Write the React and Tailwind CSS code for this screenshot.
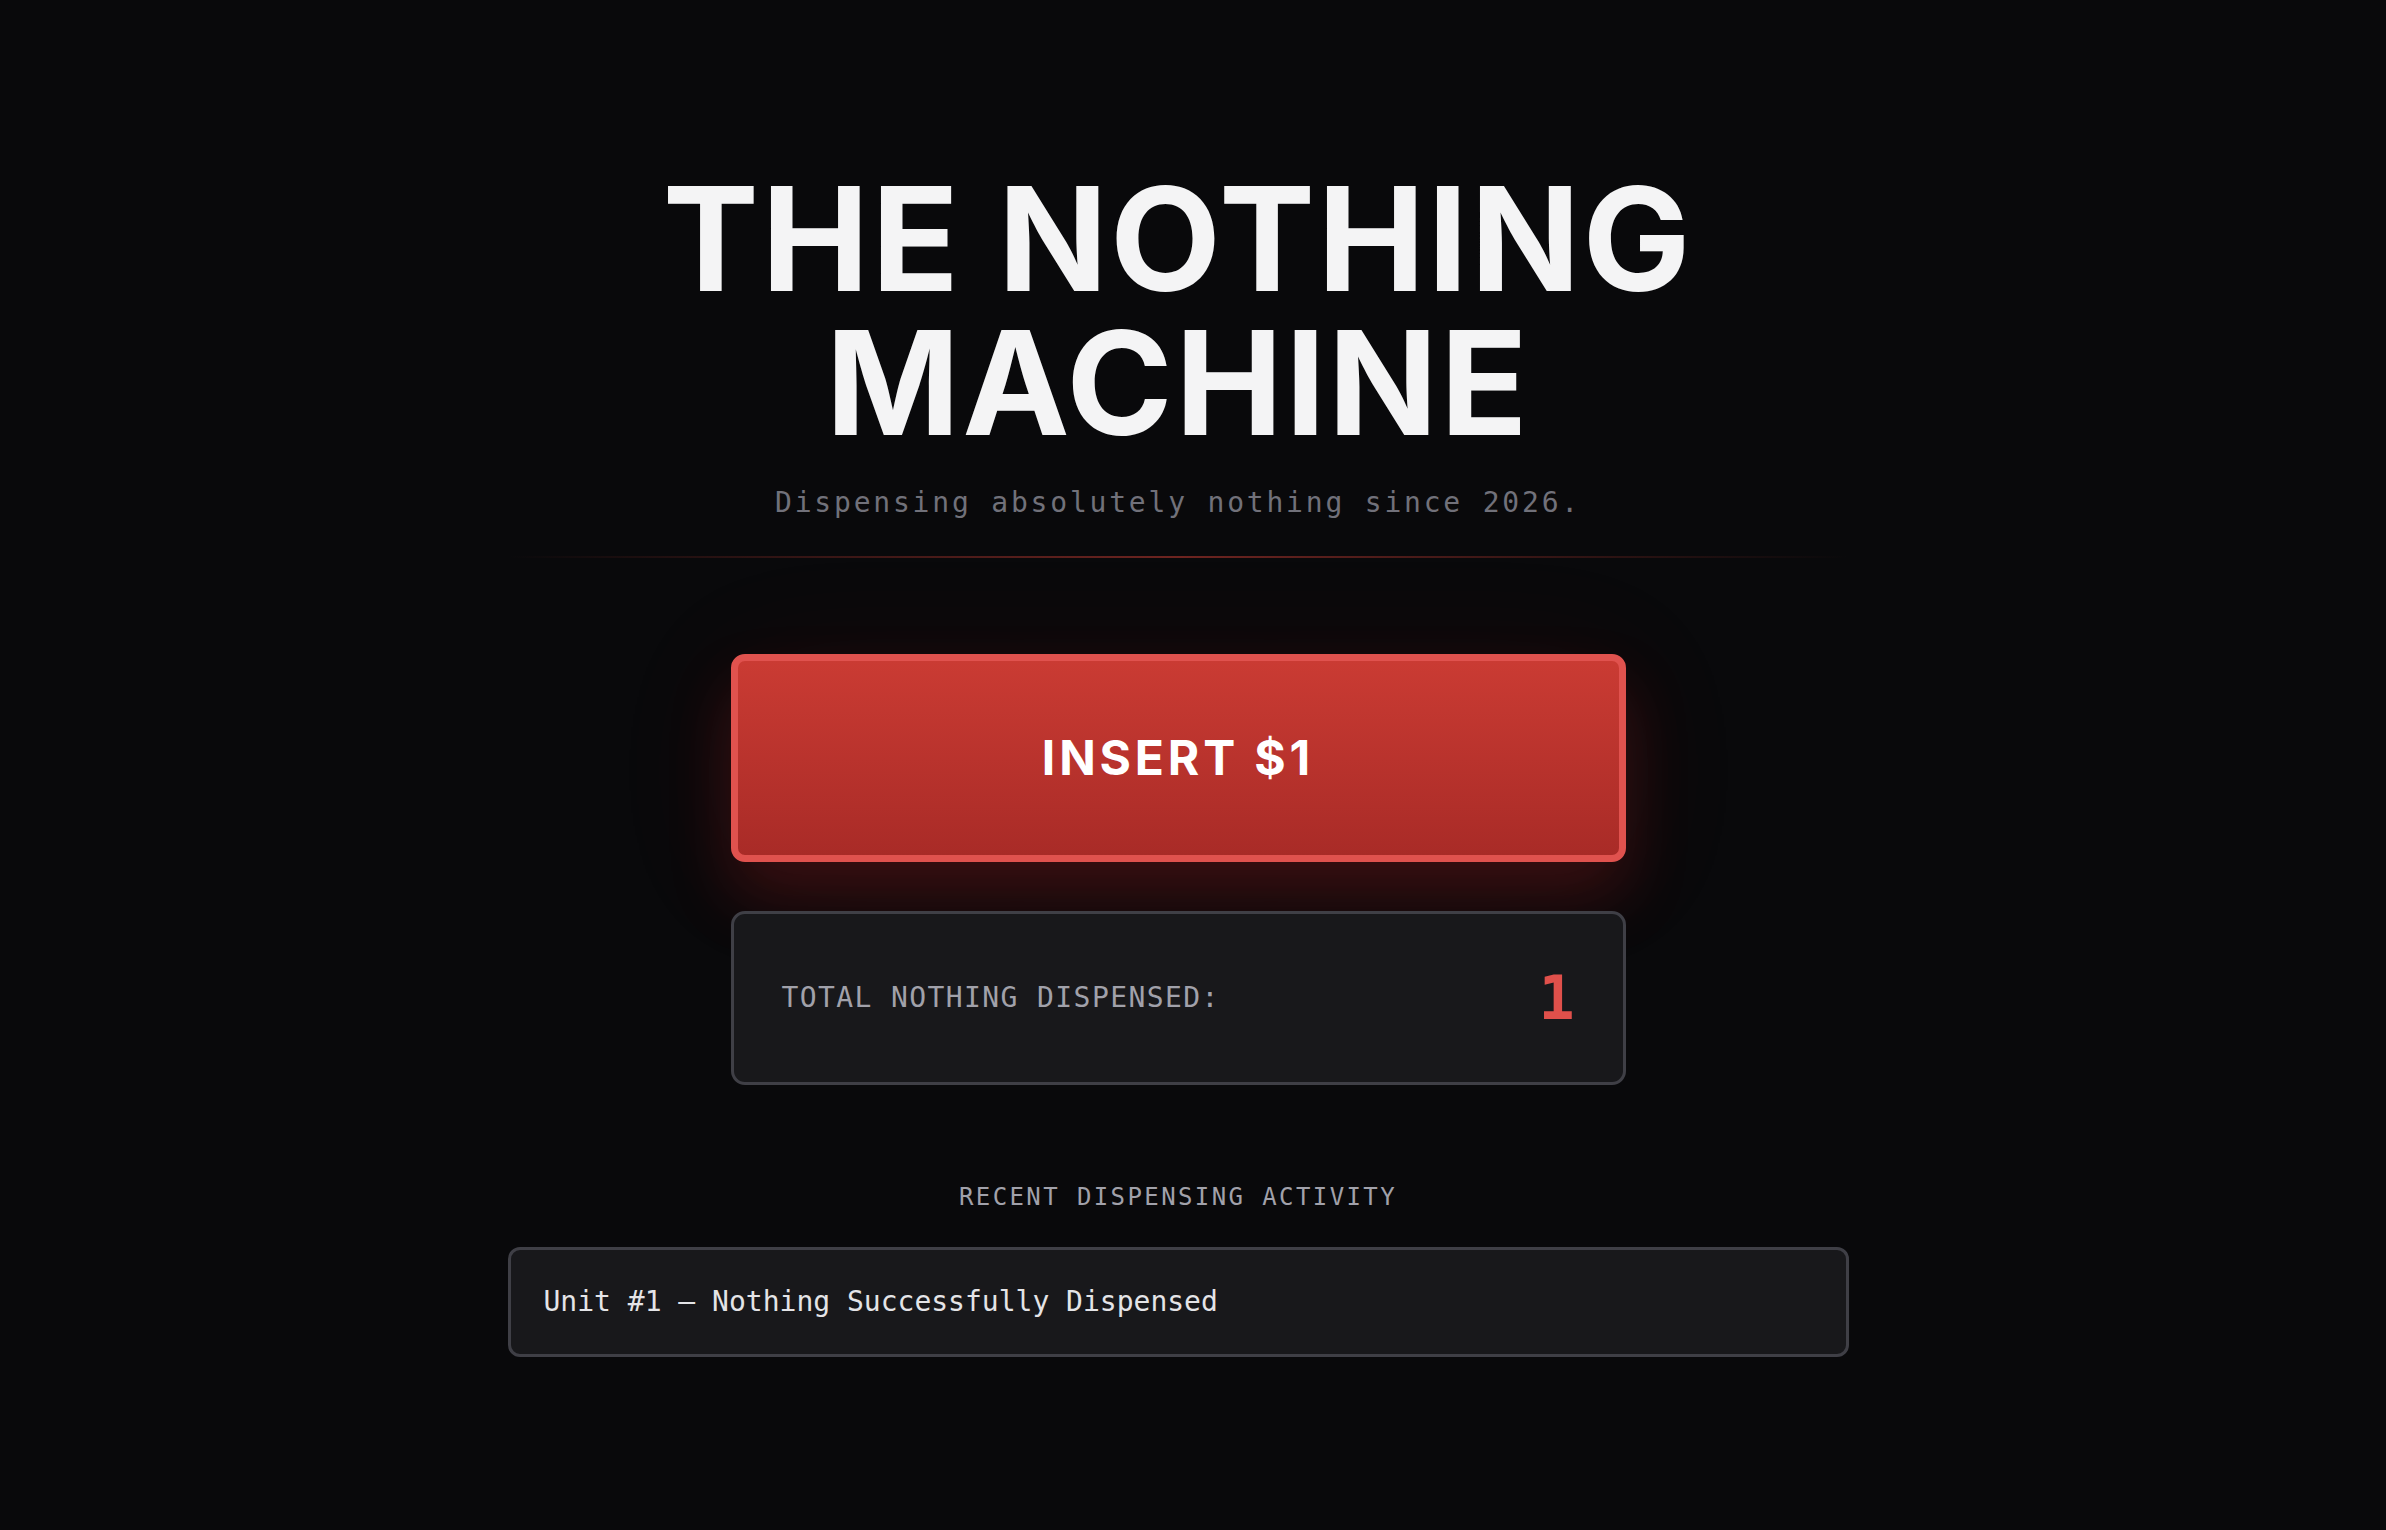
import { useState } from 'react'

const mono = "font-[family-name:'DejaVu_Sans_Mono','Liberation_Mono',monospace]"
const sans = "font-[family-name:Inter,'Noto_Sans',sans-serif]"

export default function App() {
  const [count, setCount] = useState(1)
  const [log, setLog] = useState([1])

  const dispense = () => {
    const next = count + 1
    setCount(next)
    setLog([next, ...log].slice(0, 5))
  }

  return (
    <div className="min-h-screen w-full bg-[#09090b] flex flex-col items-center pt-[167px] pb-24 pr-[30px]">
      <h1 className={`${sans} text-[144px] leading-none font-bold tracking-[0.017em] text-[#f4f4f5] text-center`}>
        <span className="block">THE NOTHING</span>
        <span className="block">MACHINE</span>
      </h1>

      <p className={`${mono} mt-[27px] text-[28px] leading-[42px] tracking-[0.1em] text-[#71717a]`}>
        Dispensing absolutely nothing since 2026.
      </p>

      <div className="mt-[32px] w-[1340px] h-[2px] bg-gradient-to-r from-transparent via-[#6e2420] to-transparent" />

      <button
        onClick={dispense}
        className={`${sans} mt-[96px] w-[895px] h-[208px] rounded-[14px] border-[7px] border-[#e0524e] bg-gradient-to-b from-[#ca3b33] to-[#a92b27] flex items-center justify-center shadow-[0_34px_64px_rgba(220,38,38,0.2),0_12px_130px_rgba(220,38,38,0.08)]`}
      >
        <span className="text-[48px] font-bold text-white tracking-[0.08em]">INSERT $1</span>
      </button>

      <div className="mt-[49px] w-[895px] rounded-[14px] border-[3px] border-[#3f3f46] bg-[#18181b] p-[48px] flex items-center justify-between">
        <span className={`${mono} text-[28px] tracking-[0.05em] text-[#a1a1aa]`}>
          TOTAL NOTHING DISPENSED:
        </span>
        <span className={`${mono} text-[60px] leading-[72px] font-bold text-[#e0504b]`}>{count}</span>
      </div>

      <h2 className={`${mono} mt-[96px] text-[24px] leading-[32px] tracking-[0.1em] text-[#a1a1aa]`}>
        RECENT DISPENSING ACTIVITY
      </h2>

      <ul className="mt-[34px] w-[1341px] flex flex-col gap-3">
        {log.map((n) => (
          <li
            key={n}
            className={`${mono} rounded-[12px] border-[3px] border-[#3f3f46] bg-[#18181b] px-[33px] py-[31px] text-[28px] leading-[42px] text-[#e4e4e7]`}
          >
            Unit #{n} — Nothing Successfully Dispensed
          </li>
        ))}
      </ul>
    </div>
  )
}
